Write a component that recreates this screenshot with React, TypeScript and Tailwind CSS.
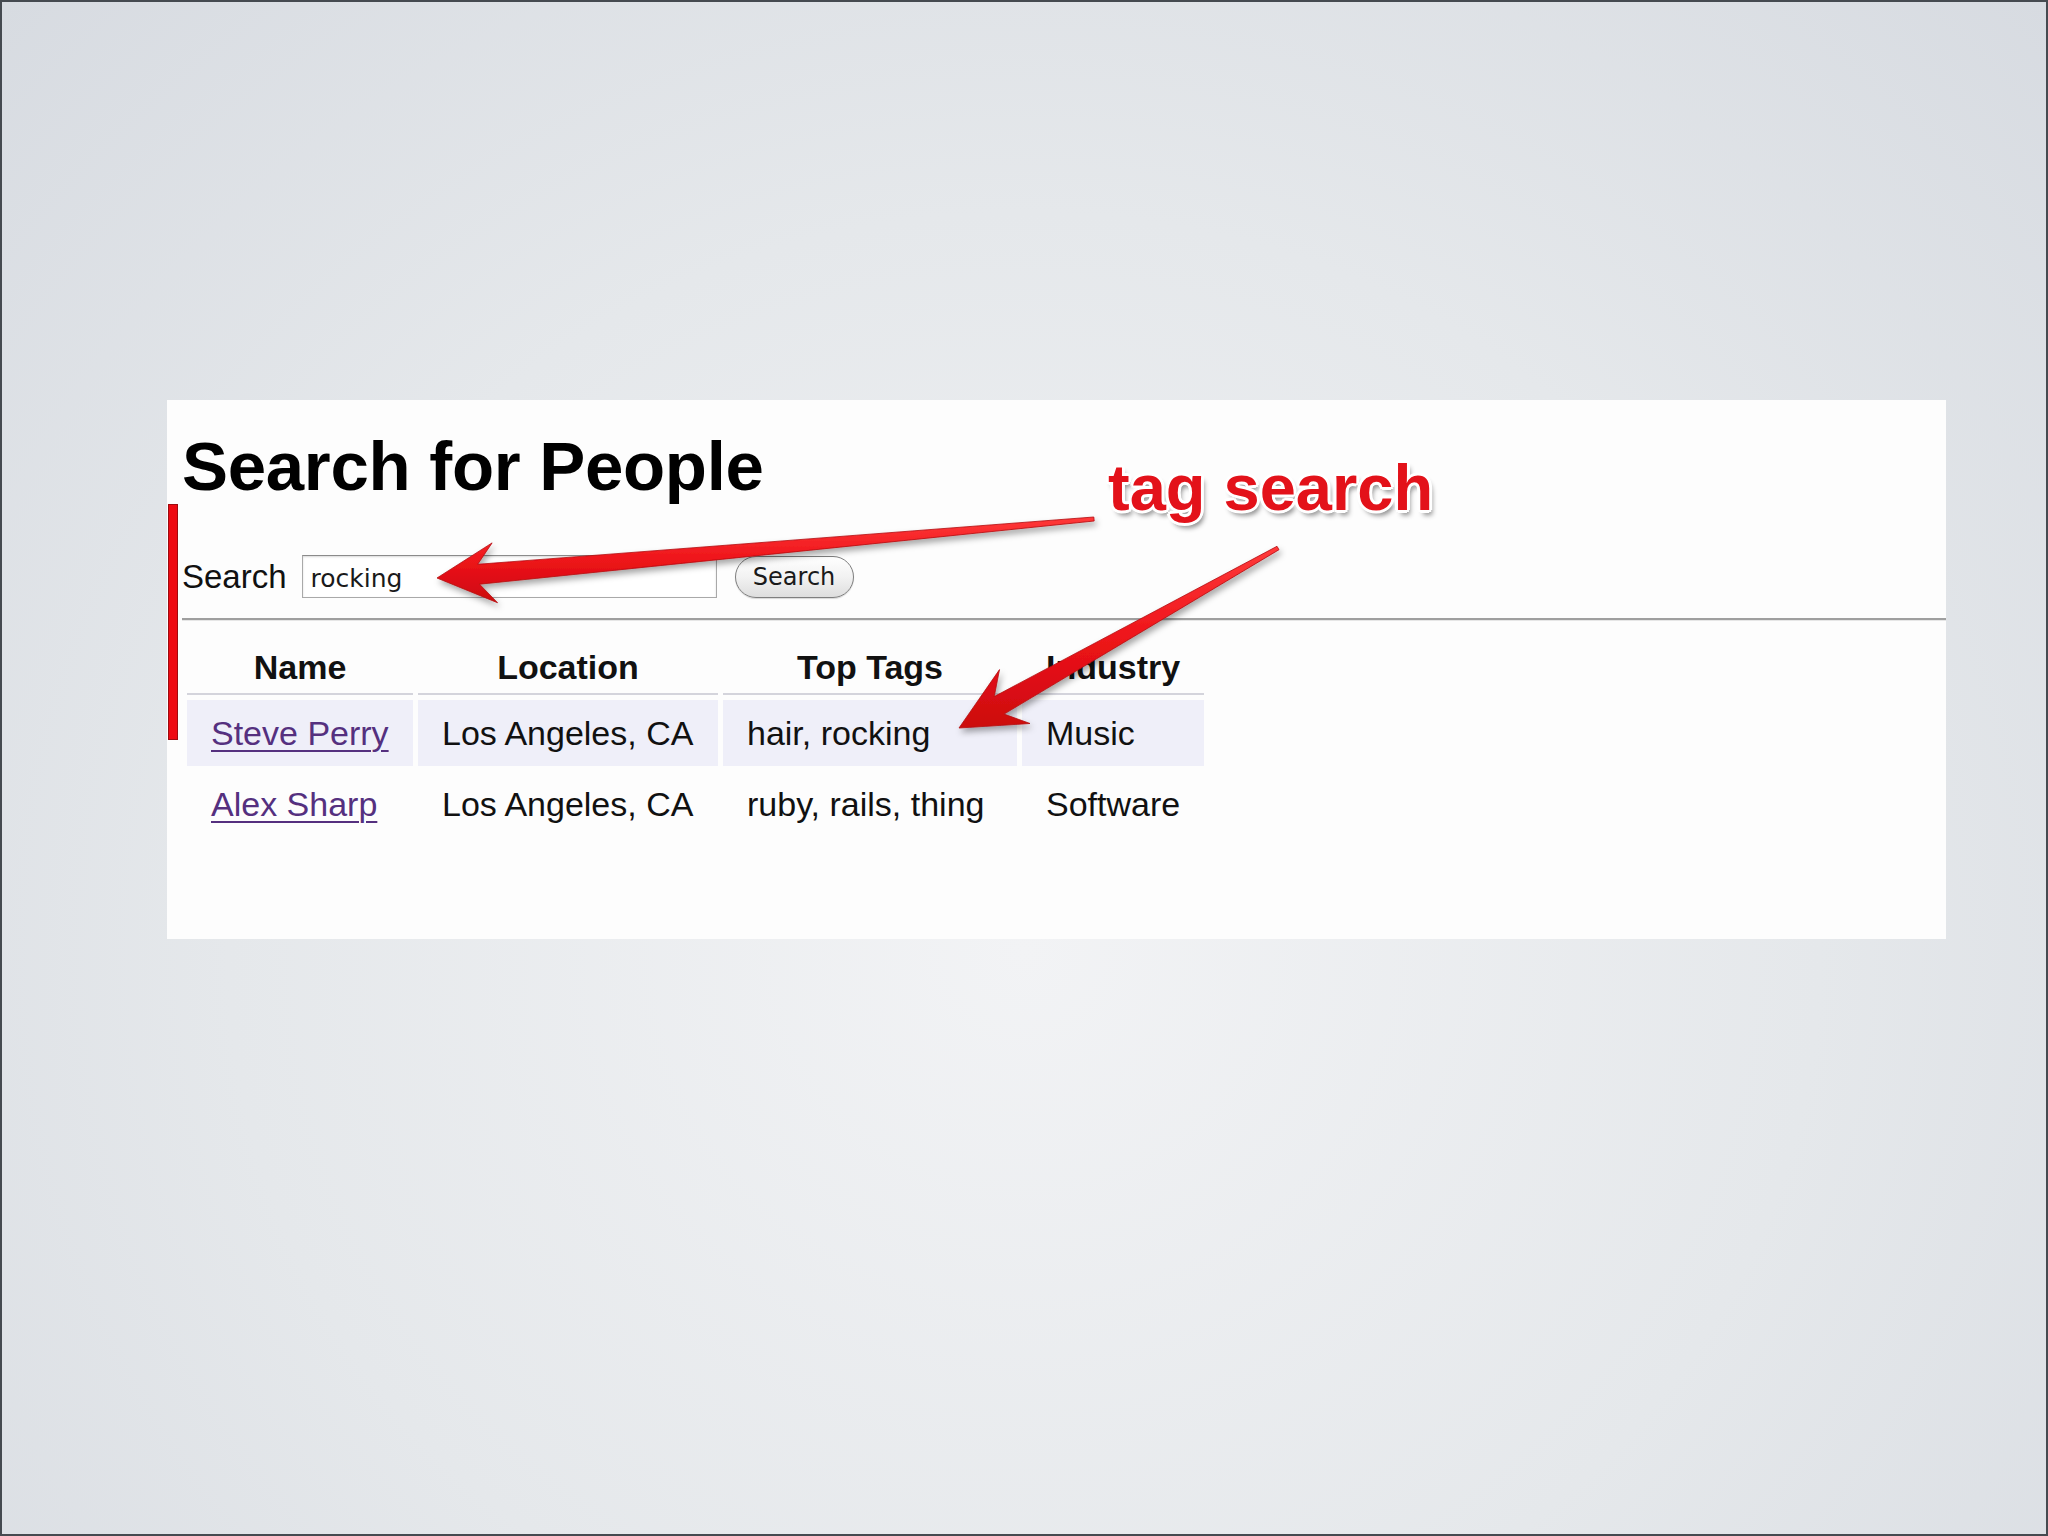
import React from 'react';

type Pt = [number, number];

// tapered skitch-style arrow, tail -> tip
function arrowPath(tail: Pt, tip: Pt, tailW: number, neckW: number, headW: number, headL: number) {
  const dx = tip[0] - tail[0];
  const dy = tip[1] - tail[1];
  const len = Math.hypot(dx, dy);
  const ux = dx / len;
  const uy = dy / len;
  const nx = -uy;
  const ny = ux;
  const at = (d: number, off: number): string => {
    const x = tip[0] - ux * d + nx * off;
    const y = tip[1] - uy * d + ny * off;
    return `${x.toFixed(1)},${y.toFixed(1)}`;
  };
  const neck = headL * 0.72;
  return [
    `M${at(len, tailW / 2)}`,
    `L${at(neck, neckW / 2)}`,
    `L${at(headL, headW / 2)}`,
    `L${tip[0]},${tip[1]}`,
    `L${at(headL, -headW / 2)}`,
    `L${at(neck, -neckW / 2)}`,
    `L${at(len, -tailW / 2)}`,
    'Z',
  ].join(' ');
}

const rows = [
  { name: 'Steve Perry', location: 'Los Angeles, CA', tags: 'hair, rocking', industry: 'Music' },
  { name: 'Alex Sharp', location: 'Los Angeles, CA', tags: 'ruby, rails, thing', industry: 'Software' },
];

const cols = [
  { label: 'Name', w: 'w-[226px]' },
  { label: 'Location', w: 'w-[300px]' },
  { label: 'Top Tags', w: 'w-[294px]' },
  { label: 'Industry', w: 'w-[182px]' },
];

export default function App() {
  return (
    <div className="relative w-[2048px] h-[1536px] overflow-hidden border-2 border-[#454a50] bg-[radial-gradient(ellipse_at_50%_62%,#f2f3f5_0%,#e5e8eb_55%,#d7dbe1_100%)] pt-[398px] pl-[165px] font-['Liberation_Sans',Arial,sans-serif] text-[#111]">
      {/* slide panel */}
      <div className="relative w-[1779px] h-[539px] bg-[#fdfdfd] pl-[15px] pt-[32px] flex flex-col">
        <div className="absolute left-[1px] top-[104px] w-[10px] h-[236px] bg-[#ee0a12] border border-[#9c0b10]" />

        <h1 className="text-[69px] leading-none font-bold text-black tracking-[-0.3px]">Search for People</h1>

        <div className="mt-[54px] flex items-center h-[43px]">
          <span className="text-[33px] leading-none">Search</span>
          <input
            readOnly
            value="rocking"
            className="ml-[15px] w-[415px] h-[43px] border border-[#a9a9a9] border-t-[#8b8b8b] bg-white pl-2 pt-[4px] text-[25px] text-[#1a1a1a] font-['DejaVu_Sans',sans-serif] shadow-[inset_0_1px_2px_rgba(0,0,0,0.15)] outline-none"
          />
          <button className="ml-[18px] w-[119px] h-[42px] rounded-full border border-[#7f7f7f] bg-[linear-gradient(#ffffff,#f2f2f2_50%,#dedede)] text-[24px] leading-none text-[#1a1a1a] font-['DejaVu_Sans',sans-serif] shadow-[0_1px_1px_rgba(0,0,0,0.15)]">
            Search
          </button>
        </div>

        <div className="mt-[20px] border-t-2 border-t-[#9f9f9f] border-b border-b-[#e6e6e6]" />

        <table className="mt-[16px] border-separate [border-spacing:5px] text-[34px] leading-[40px] w-max whitespace-nowrap">
          <thead>
            <tr>
              {cols.map((c) => (
                <th key={c.label} className={`${c.w} px-[24px] pt-[5px] pb-[6px] font-bold text-center border-b-2 border-[#d4d4dc]`}>
                  {c.label}
                </th>
              ))}
            </tr>
          </thead>
          <tbody>
            {rows.map((r, i) => {
              const bg = i === 0 ? 'bg-[#efeff9]' : '';
              return (
                <tr key={r.name}>
                  <td className={`px-[24px] py-[13px] text-left ${bg}`}>
                    <a href="#" className="text-[#55307f] underline decoration-2 underline-offset-[5px]">
                      {r.name}
                    </a>
                  </td>
                  <td className={`px-[24px] py-[13px] text-left ${bg}`}>{r.location}</td>
                  <td className={`px-[24px] py-[13px] text-left ${bg}`}>{r.tags}</td>
                  <td className={`px-[24px] py-[13px] text-left ${bg}`}>{r.industry}</td>
                </tr>
              );
            })}
          </tbody>
        </table>
      </div>

      {/* annotation arrows */}
      <svg className="absolute inset-0 pointer-events-none" width="2048" height="1536" viewBox="0 0 2048 1536">
        <defs>
          <linearGradient id="red" x1="0" y1="0" x2="0" y2="1">
            <stop offset="0" stopColor="#ff3a3a" />
            <stop offset="0.5" stopColor="#ee141a" />
            <stop offset="1" stopColor="#cc080e" />
          </linearGradient>
          <filter id="shadow" x="-10%" y="-10%" width="120%" height="130%">
            <feDropShadow dx="2" dy="4" stdDeviation="3" floodColor="#000" floodOpacity="0.35" />
          </filter>
        </defs>
        <path
          d={arrowPath([1092, 517], [435, 576], 4, 20, 60, 58)}
          fill="url(#red)"
          stroke="#b30a0f"
          strokeWidth="0.8"
          strokeLinejoin="round"
          filter="url(#shadow)"
        />
        <path
          d={arrowPath([1276, 546], [957, 726], 4, 20, 62, 64)}
          fill="url(#red)"
          stroke="#b30a0f"
          strokeWidth="0.8"
          strokeLinejoin="round"
          filter="url(#shadow)"
        />
      </svg>

      <span className="absolute left-[1106px] top-[453px] text-[65px] leading-none font-bold text-[#e3121a] [text-shadow:3px_0_0_#fff,-3px_0_0_#fff,0_3px_0_#fff,0_-3px_0_#fff,2px_2px_0_#fff,-2px_-2px_0_#fff,2px_-2px_0_#fff,-2px_2px_0_#fff,3px_5px_5px_rgba(0,0,0,0.45)]">
        tag search
      </span>
    </div>
  );
}
